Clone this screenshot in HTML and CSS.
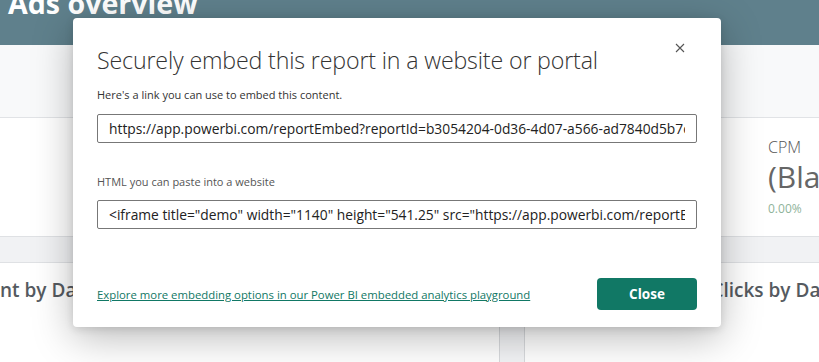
FILE: index.html
```html
<!DOCTYPE html>
<html lang="en">
<head>
    <meta charset="UTF-8">
    <meta name="viewport" content="width=device-width, initial-scale=1.0">
    <title>Ads overview</title>
    <link rel="stylesheet" href="styles.css">
</head>
<body>
    <div class="report">
        <div class="report-header">
            <h1>Ads overview</h1>
        </div>
        <div class="band"></div>
        <div class="kpi-row">
            <div class="kpi-card"></div>
            <div class="kpi-card kpi-right">
                <div class="kpi-label">CPM</div>
                <div class="kpi-value">(Blank)</div>
                <div class="kpi-change">0.00%</div>
            </div>
        </div>
        <div class="gap-band"></div>
        <div class="chart-row">
            <div class="chart-card chart-left">
                <h3>nt by Date</h3>
            </div>
            <div class="chart-card chart-right">
                <h3>Impressions and Clicks by Date</h3>
            </div>
        </div>
    </div>

    <div class="dialog">
        <button class="dialog-close" aria-label="Close">
            <svg width="10" height="10" viewBox="0 0 10 10"><path d="M1 1L9 9M9 1L1 9" stroke="#555" stroke-width="1.1"/></svg>
        </button>
        <h2>Securely embed this report in a website or portal</h2>
        <label class="field-label">Here's a link you can use to embed this content.</label>
        <input class="field" type="text" readonly value="https://app.powerbi.com/reportEmbed?reportId=b3054204-0d36-4d07-a566-ad7840d5b7c1&autoAuth=true">
        <label class="field-label second">HTML you can paste into a website</label>
        <input class="field" type="text" readonly value='&lt;iframe title="demo" width="1140" height="541.25" src="https://app.powerbi.com/reportEmbed?reportId=b3054204"'>
        <div class="dialog-footer">
            <a href="#" class="playground-link">Explore more embedding options in our Power BI embedded analytics playground</a>
            <button class="close-button">Close</button>
        </div>
    </div>
</body>
</html>
```

FILE: styles.css
```css
body {
    margin: 0;
    font-family: "Open Sans", "Noto Sans", sans-serif;
    background-color: #f3f4f6;
    overflow: hidden;
    height: 362px;
}
.report {
    width: 819px;
}
.report-header {
    height: 45px;
    background-color: #5f808c;
    overflow: hidden;
}
.report-header h1 {
    margin: -17px 0 0 8px;
    color: white;
    font-size: 28.6px;
    font-weight: 700;
    line-height: 40px;
}
.band {
    height: 72px;
    background-color: #f8f9fa;
    border-bottom: 1px solid #e1e3e6;
}
.kpi-row {
    display: grid;
    grid-template-columns: 752px 1fr;
    height: 118px;
    background-color: white;
    border-bottom: 1px solid #dfe1e4;
}
.kpi-right {
    padding: 18px 0 0 16px;
    overflow: hidden;
}
.kpi-label {
    font-size: 16px;
    color: #555;
    font-weight: 300;
    line-height: 22px;
}
.kpi-value {
    font-size: 30px;
    color: #666;
    line-height: 38px;
    white-space: nowrap;
}
.kpi-change {
    margin-top: 4px;
    font-size: 12px;
    color: #8fb39a;
}
.gap-band {
    height: 25px;
    background-color: #f1f2f4;
    border-bottom: 1px solid #dfe1e4;
}
.chart-row {
    display: grid;
    grid-template-columns: 500px 295px;
    column-gap: 24px;
    height: 100px;
}
.chart-card {
    background-color: white;
    overflow: hidden;
}
.chart-left {
    border-right: 1px solid #d8dadd;
}
.chart-right {
    border-left: 1px solid #d8dadd;
}
.chart-card h3 {
    margin: 14px 0 0;
    font-size: 19px;
    font-weight: 600;
    color: #555a60;
    white-space: nowrap;
}
.chart-right h3 {
    margin-left: 30px;
}
.dialog {
    position: absolute;
    left: 73px;
    top: 18px;
    width: 600px;
    height: 309px;
    padding: 0 24px;
    background-color: white;
    border-radius: 4px;
    box-shadow: 0 10px 40px rgba(0,0,0,0.28), 0 2px 8px rgba(0,0,0,0.12);
}
.dialog h2 {
    margin: 26px 0 0;
    font-size: 23.2px;
    font-weight: 300;
    color: #333;
    line-height: 32px;
    letter-spacing: -0.15px;
}
.dialog-close {
    position: absolute;
    top: 23px;
    right: 36px;
    padding: 0;
    border: none;
    background: none;
    cursor: pointer;
}
.field-label {
    display: block;
    margin-top: 11px;
    font-size: 11px;
    color: #333;
    line-height: 16px;
}
.field-label.second {
    margin-top: 31px;
    color: #555;
}
.field {
    display: block;
    box-sizing: border-box;
    width: 600px;
    height: 29px;
    margin-top: 11px;
    padding: 0 11px;
    border: 1px solid #777;
    border-radius: 2px;
    font-family: "Open Sans", "Noto Sans", sans-serif;
    font-size: 13.8px;
    color: #222;
    outline: none;
}
.field-label.second + .field {
    margin-top: 10px;
}
.dialog-footer {
    display: flex;
    justify-content: space-between;
    align-items: center;
    margin-top: 49px;
}
.playground-link {
    font-size: 11.35px;
    color: #117865;
}
.close-button {
    width: 100px;
    height: 32px;
    background-color: #117865;
    color: white;
    border: none;
    border-radius: 4px;
    font-family: "Open Sans", "Noto Sans", sans-serif;
    font-size: 13.5px;
    font-weight: 700;
    cursor: pointer;
}
```
